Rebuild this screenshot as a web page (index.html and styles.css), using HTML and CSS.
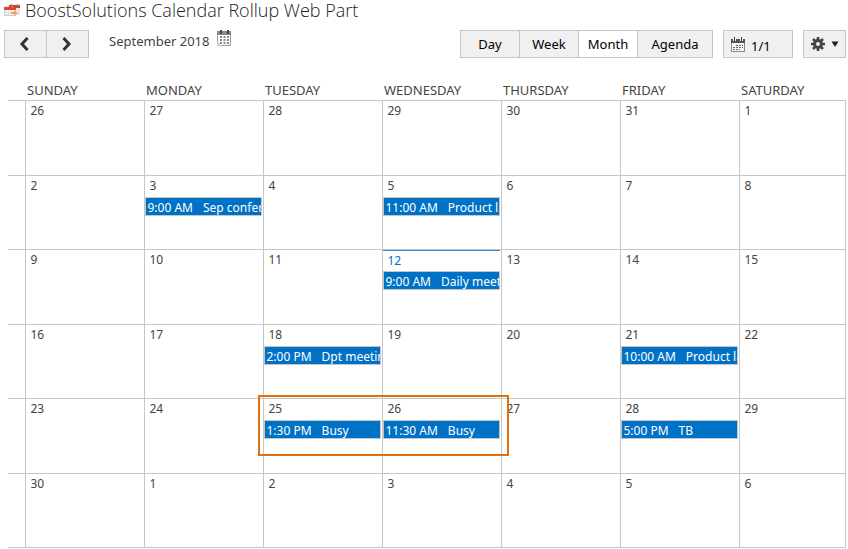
FILE: index.html
```html
<!DOCTYPE html>
<html lang="en">
<head>
  <meta charset="UTF-8" />
  <title>BoostSolutions Calendar Rollup Web Part</title>
  <link rel="stylesheet" href="styles.css">
</head>
<body>
  <header class="title-bar">
    <svg class="title-icon" width="16" height="14" viewBox="0 0 16 14">
      <rect x="5" y="2" width="10" height="9" fill="#f0eeec" stroke="#d5cfcb" />
      <rect x="5" y="2" width="11" height="3" fill="#d9412b" />
      <rect x="0.5" y="4.5" width="11" height="8" fill="#f3f1ef" stroke="#d5cfcb" />
      <rect x="0" y="4" width="12" height="3" fill="#e0452c" />
      <path d="M2.5 3v2M8.500 3v2M7.500 1v2M13.500 1v2" stroke="#b5938a" />
      <path d="M2 9.500h5M2 11.500h4" stroke="#d3d0ce" stroke-dasharray="1 1" />
      <path d="M7 9h3V7.500l4 2.500-4 2.500v-1.500H7z" fill="#f5a550" />
    </svg>
    <h1>BoostSolutions Calendar Rollup Web Part</h1>
  </header>

  <div class="toolbar">
    <div class="group nav">
      <button type="button" aria-label="Previous month">
        <svg width="14" height="14" viewBox="0 0 14 14"><path d="M8.500 1L3 7l5.500 6" /></svg>
      </button>
      <button type="button" aria-label="Next month">
        <svg width="14" height="14" viewBox="0 0 14 14"><path d="M2.500 1L8 7l-5.500 6" /></svg>
      </button>
    </div>
    <div class="period">
      <span>September 2018</span>
      <button type="button" class="pick" aria-label="Choose date">
        <svg width="14" height="16" viewBox="0 0 14 16">
          <path d="M0.500 1.500h13v14H0.500z" fill="#fff" stroke="#999" />
          <path d="M0 1h14v4H0z" fill="#888" />
          <path d="M3 0h2v4H3zM10 0h2v4h-2z" fill="#444" />
          <path d="M3 7h9M3 10h9M3 13h9" stroke="#888" stroke-width="2" stroke-dasharray="2 1.500" />
          <path d="M0 11l5 5H0z" fill="#ccc" />
        </svg>
      </button>
    </div>
    <div class="group views">
      <button type="button">Day</button>
      <button type="button">Week</button>
      <button type="button" class="active">Month</button>
      <button type="button">Agenda</button>
    </div>
    <div class="group count">
      <button type="button">
        <svg width="14" height="15" viewBox="0 0 14 15">
          <path d="M0.500 2.500h13v12H0.500z" fill="#f5f5f5" stroke="#888" />
          <path d="M0 2h14v4H0z" fill="#555" />
          <path d="M2 0h3v4H2zM9 0h3v4H9z" fill="#f0f0f0" />
          <path d="M3 0h1v4H3zM10 0h1v4h-1z" fill="#444" />
          <path d="M5 8.500h7M2 10.500h10M2 12.500h7" stroke="#666" stroke-dasharray="2 1" />
        </svg>
        <span>1/1</span>
      </button>
    </div>
    <div class="group settings">
      <button type="button" aria-label="Settings">
        <svg width="14" height="14" viewBox="0 0 14 14">
          <circle cx="7" cy="7" r="3.500" fill="none" stroke="#444" stroke-width="3" />
          <path d="M7 0v3M7 11v3M0 7h3M11 7h3M2 2l2.200 2.200M9.800 9.800L12 12M12 2L9.800 4.200M4.200 9.800L2 12" stroke="#444" stroke-width="2.600" />
        </svg>
        <svg width="8" height="6" viewBox="0 0 8 6"><path d="M0.500 0.500h7L4 6z" fill="#222" /></svg>
      </button>
    </div>
  </div>

  <table class="calendar">
    <colgroup>
      <col class="gutter">
      <col class="day" span="6">
      <col>
    </colgroup>
    <thead>
      <tr>
        <td></td>
        <th scope="col">SUNDAY</th>
        <th scope="col">MONDAY</th>
        <th scope="col">TUESDAY</th>
        <th scope="col">WEDNESDAY</th>
        <th scope="col">THURSDAY</th>
        <th scope="col">FRIDAY</th>
        <th scope="col">SATURDAY</th>
      </tr>
    </thead>
    <tbody>
      <tr>
        <td></td>
        <td><span class="date">26</span></td>
        <td><span class="date">27</span></td>
        <td><span class="date">28</span></td>
        <td><span class="date">29</span></td>
        <td><span class="date">30</span></td>
        <td><span class="date">31</span></td>
        <td><span class="date">1</span></td>
      </tr>
      <tr>
        <td></td>
        <td><span class="date">2</span></td>
        <td><span class="date">3</span><a class="event" href="#"><span>9:00 AM</span><span>Sep conference</span></a></td>
        <td><span class="date">4</span></td>
        <td><span class="date">5</span><a class="event" href="#"><span>11:00 AM</span><span>Product launch</span></a></td>
        <td><span class="date">6</span></td>
        <td><span class="date">7</span></td>
        <td><span class="date">8</span></td>
      </tr>
      <tr>
        <td></td>
        <td><span class="date">9</span></td>
        <td><span class="date">10</span></td>
        <td><span class="date">11</span></td>
        <td class="today"><span class="date">12</span><a class="event" href="#"><span>9:00 AM</span><span>Daily meeting</span></a></td>
        <td><span class="date">13</span></td>
        <td><span class="date">14</span></td>
        <td><span class="date">15</span></td>
      </tr>
      <tr>
        <td></td>
        <td><span class="date">16</span></td>
        <td><span class="date">17</span></td>
        <td><span class="date">18</span><a class="event" href="#"><span>2:00 PM</span><span>Dpt meeting</span></a></td>
        <td><span class="date">19</span></td>
        <td><span class="date">20</span></td>
        <td><span class="date">21</span><a class="event" href="#"><span>10:00 AM</span><span>Product launch</span></a></td>
        <td><span class="date">22</span></td>
      </tr>
      <tr>
        <td></td>
        <td><span class="date">23</span></td>
        <td><span class="date">24</span></td>
        <td class="marked"><span class="date">25</span><a class="event" href="#"><span>1:30 PM</span><span>Busy</span></a></td>
        <td><span class="date">26</span><a class="event" href="#"><span>11:30 AM</span><span>Busy</span></a></td>
        <td><span class="date">27</span></td>
        <td><span class="date">28</span><a class="event" href="#"><span>5:00 PM</span><span>TB</span></a></td>
        <td><span class="date">29</span></td>
      </tr>
      <tr>
        <td></td>
        <td><span class="date">30</span></td>
        <td><span class="date">1</span></td>
        <td><span class="date">2</span></td>
        <td><span class="date">3</span></td>
        <td><span class="date">4</span></td>
        <td><span class="date">5</span></td>
        <td><span class="date">6</span></td>
      </tr>
    </tbody>
  </table>
</body>
</html>
```

FILE: styles.css
```css
*,
*::after {
  box-sizing: border-box;
}

body {
  margin: 0;
  background-color: #ffffff;
  color: #444444;
  font-family: "Segoe UI", "Noto Sans", "Open Sans", sans-serif;
  font-size: 12px;
}

.title-bar {
  display: flex;
  align-items: center;
  gap: 5px;
  height: 20px;
  padding-left: 4px;
}

h1 {
  margin: 0;
  color: #222222;
  font-family: "Segoe UI", "Open Sans", sans-serif;
  font-size: 18px;
  line-height: 20px;
  font-weight: 300;
}

.toolbar {
  display: flex;
  align-items: flex-start;
  padding: 10px 2px 0 4px;
}

button {
  padding: 0;
  border: none;
  background: none;
  color: #000000;
  font-family: inherit;
  font-size: 13px;
  cursor: pointer;
}

.group {
  display: flex;
  height: 28px;
  border: 1px solid #c6c6c6;
  background-color: #f0f0f0;
}

.group button {
  display: flex;
  align-items: center;
  justify-content: center;
}

.group button + button {
  border-left: 1px solid #c6c6c6;
}

.nav {
  width: 85px;
}

.nav button {
  flex: 1;
}

.nav path {
  fill: none;
  stroke: #333333;
  stroke-width: 3;
}

.period {
  display: flex;
  gap: 8px;
  margin-left: 20px;
  font-size: 13px;
  line-height: 22px;
}

.pick {
  height: 16px;
}

.pick svg {
  display: block;
}

.views {
  width: 253px;
  margin-left: auto;
}

.views button {
  width: 59px;
}

.views button:first-child {
  width: 58px;
}

.views button:last-child {
  flex: 1;
}

.views .active {
  background-color: #ffffff;
}

.count {
  width: 70px;
  margin: 0 10px;
  padding-left: 7px;
}

.count button {
  gap: 6px;
}

.count span {
  padding-top: 4px;
}

.settings {
  width: 43px;
  justify-content: center;
}

.settings button {
  gap: 6px;
}

.calendar {
  width: calc(100% - 10px);
  margin: 24px 2px 0 8px;
  border-collapse: collapse;
  table-layout: fixed;
}

.gutter {
  width: 17px;
}

.day {
  width: 14.21%;
}

.calendar th {
  height: 18px;
  padding: 0 0 0 2px;
  font-size: 13px;
  font-weight: 400;
  line-height: 17px;
  text-align: left;
  vertical-align: top;
}

.calendar tbody td {
  position: relative;
  height: 75px;
  padding: 0;
  border: 1px solid #c6c6c6;
  vertical-align: top;
}

.calendar tbody tr:nth-child(even) td {
  height: 74px;
}

.calendar tbody td:first-child {
  border-left: none;
}

.date {
  display: block;
  height: 21px;
  padding-left: 5px;
  line-height: 20px;
}

.event {
  display: flex;
  gap: 10px;
  height: 19px;
  margin-right: 1px;
  padding-left: 2px;
  overflow: hidden;
  border: 1px solid #c6c6c6;
  background-color: #0072c6;
  color: #ffffff;
  line-height: 20px;
  text-decoration: none;
  white-space: nowrap;
}

.today .date {
  margin-right: 1px;
  border-top: 1px solid #2a8dd4;
  color: #0072c6;
}

/* outline around the two busy days */
.marked::after {
  content: "";
  position: absolute;
  z-index: 1;
  top: -4px;
  left: -6px;
  width: calc(200% + 15px);
  height: 61px;
  border: 2px solid #e07010;
}
```
